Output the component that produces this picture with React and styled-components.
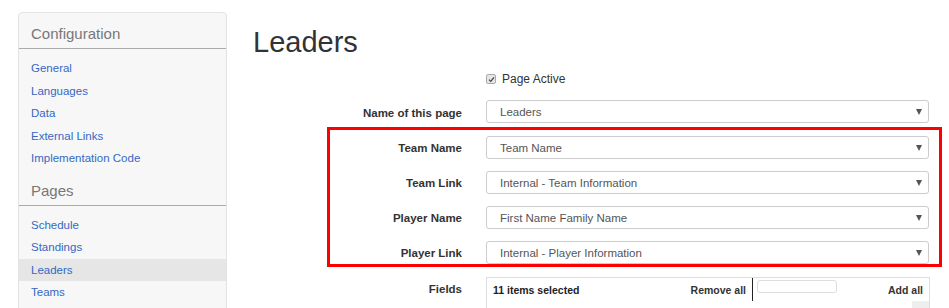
import React from 'react'
import styled, { createGlobalStyle } from 'styled-components'

const GlobalStyle = createGlobalStyle`
  html, body {
    margin: 0;
    padding: 0;
    background: #fff;
    overflow: hidden;
  }
  body {
    font-family: "Liberation Sans", Arial, sans-serif;
    color: #333;
  }
`

const Page = styled.div`
  display: flex;
  align-items: flex-start;
  box-sizing: border-box;
  padding: 12px 0 0 18px;
  height: 308px;
  overflow: hidden;
`

const Sidebar = styled.nav`
  width: 207px;
  min-height: 320px;
  flex-shrink: 0;
  background: #f7f7f7;
  border: 1px solid #e3e3e3;
  border-radius: 4px;
`

const SideHeading = styled.h3`
  margin: 0;
  padding: 11px 12px 4px;
  line-height: 20px;
  font-size: 15px;
  font-weight: normal;
  color: #777;
  border-bottom: 1px solid #aaa;
`

const SideList = styled.ul`
  list-style: none;
  margin: 8px 0 0;
  padding: 0;
`

const SideItem = styled.li`
  height: 22.5px;
  display: flex;
  align-items: center;
  padding-left: 12px;
  font-size: 11.5px;
  color: #3568c4;
  background: ${(p) => (p.$active ? '#e6e6e6' : 'transparent')};
`

const Main = styled.main`
  margin-left: 26px;
  width: 689px;
  flex-shrink: 0;
  padding-top: 14px;
`

const Title = styled.h1`
  margin: 0;
  font-size: 29px;
  line-height: 33px;
  font-weight: normal;
  color: #333;
`

const CheckRow = styled.label`
  display: flex;
  align-items: center;
  height: 20px;
  margin: 10px 0 11px 233px;
  font-size: 12px;
  color: #333;
`

const Check = styled.span`
  width: 8px;
  height: 8px;
  border: 1px solid #aaa;
  border-radius: 2px;
  background: #e6e6e6;
  margin-right: 6px;
  display: flex;
  align-items: center;
  justify-content: center;
`

const Row = styled.div`
  display: flex;
  align-items: center;
  gap: 24px;
  padding-right: ${(p) => p.$right}px;
  margin-bottom: 12px;
  &:last-child {
    margin-bottom: 0;
  }
`

const Label = styled.div`
  width: ${(p) => p.$width}px;
  flex-shrink: 0;
  text-align: right;
  font-size: 11.5px;
  font-weight: bold;
  color: #333;
  padding-top: ${(p) => (p.$low ? 2 : 0)}px;
`

const Select = styled.div`
  width: 443px;
  height: 23px;
  box-sizing: border-box;
  border: 1px solid #ccc;
  border-radius: 3px;
  display: flex;
  align-items: center;
  justify-content: space-between;
  padding: 0 6px 0 13px;
  font-size: 11.5px;
  color: #555;
  background: #fff;
`

const Arrow = styled.span`
  width: 0;
  height: 0;
  border-left: 3.5px solid transparent;
  border-right: 3.5px solid transparent;
  border-top: 6px solid #555;
`

const Highlight = styled.div`
  margin: 0 0 10px 74px;
  border: 3px solid #f00;
  padding-top: 6px;
`

const TopRow = styled(Row)`
  margin-bottom: 4px;
  &:last-child {
    margin-bottom: 4px;
  }
`

const FieldsRow = styled.div`
  display: flex;
  align-items: flex-start;
  gap: 24px;
`

const FieldsLabel = styled(Label)`
  padding-top: 5px;
  line-height: 14px;
`

const MultiBox = styled.div`
  width: 444px;
  height: 60px;
  box-sizing: border-box;
  border: 1px solid #ddd;
  display: flex;
`

const Pane = styled.div`
  width: ${(p) => p.$width}px;
  box-sizing: border-box;
  border-right: ${(p) => (p.$divider ? '1px solid #222' : 'none')};
  height: 23px;
  display: flex;
  align-items: center;
  justify-content: space-between;
  padding: 0 6px;
  font-size: 10.5px;
  color: #222;
  position: relative;
`

const Count = styled.span`
  font-weight: bold;
`

const ActionLink = styled.span`
  font-weight: bold;
  color: #333;
`

const Search = styled.span`
  width: 78px;
  height: 11px;
  border: 1px solid #ddd;
  border-radius: 3px;
  align-self: flex-start;
  margin-top: 2px;
  margin-left: -2px;
`

const ScrollBtn = styled.span`
  position: absolute;
  right: 0;
  top: 23px;
  width: 17px;
  height: 12px;
  background: #eee;
`

const configLinks = ['General', 'Languages', 'Data', 'External Links', 'Implementation Code']
const pageLinks = ['Schedule', 'Standings', 'Leaders', 'Teams']

const highlighted = [
  ['Team Name', 'Team Name'],
  ['Team Link', 'Internal - Team Information'],
  ['Player Name', 'First Name Family Name'],
  ['Player Link', 'Internal - Player Information'],
]

const SelectBox = ({ value }) => (
  <Select>
    <span>{value}</span>
    <Arrow />
  </Select>
)

export default function App() {
  return (
    <>
      <GlobalStyle />
      <Page>
        <Sidebar>
          <SideHeading>Configuration</SideHeading>
          <SideList>
            {configLinks.map((l) => (
              <SideItem key={l}>{l}</SideItem>
            ))}
          </SideList>
          <SideHeading>Pages</SideHeading>
          <SideList>
            {pageLinks.map((l) => (
              <SideItem key={l} $active={l === 'Leaders'}>
                {l}
              </SideItem>
            ))}
          </SideList>
        </Sidebar>

        <Main>
          <Title>Leaders</Title>
          <CheckRow>
            <Check>
              <svg width="7" height="7" viewBox="0 0 7 7">
                <path d="M1 3.6 L2.8 5.4 L6 1.4" fill="none" stroke="#444" strokeWidth="1.3" />
              </svg>
            </Check>
            Page Active
          </CheckRow>

          <TopRow $right={13}>
            <Label $width={209} $low>Name of this page</Label>
            <SelectBox value="Leaders" />
          </TopRow>

          <Highlight>
            {highlighted.map(([label, value]) => (
              <Row key={label} $right={10}>
                <Label $width={132}>{label}</Label>
                <SelectBox value={value} />
              </Row>
            ))}
          </Highlight>

          <FieldsRow>
            <FieldsLabel $width={209}>Fields</FieldsLabel>
            <MultiBox>
              <Pane $width={266} $divider>
                <Count>11 items selected</Count>
                <ActionLink>Remove all</ActionLink>
              </Pane>
              <Pane $width={176}>
                <Search />
                <ActionLink>Add all</ActionLink>
                <ScrollBtn />
              </Pane>
            </MultiBox>
          </FieldsRow>
        </Main>
      </Page>
    </>
  )
}
